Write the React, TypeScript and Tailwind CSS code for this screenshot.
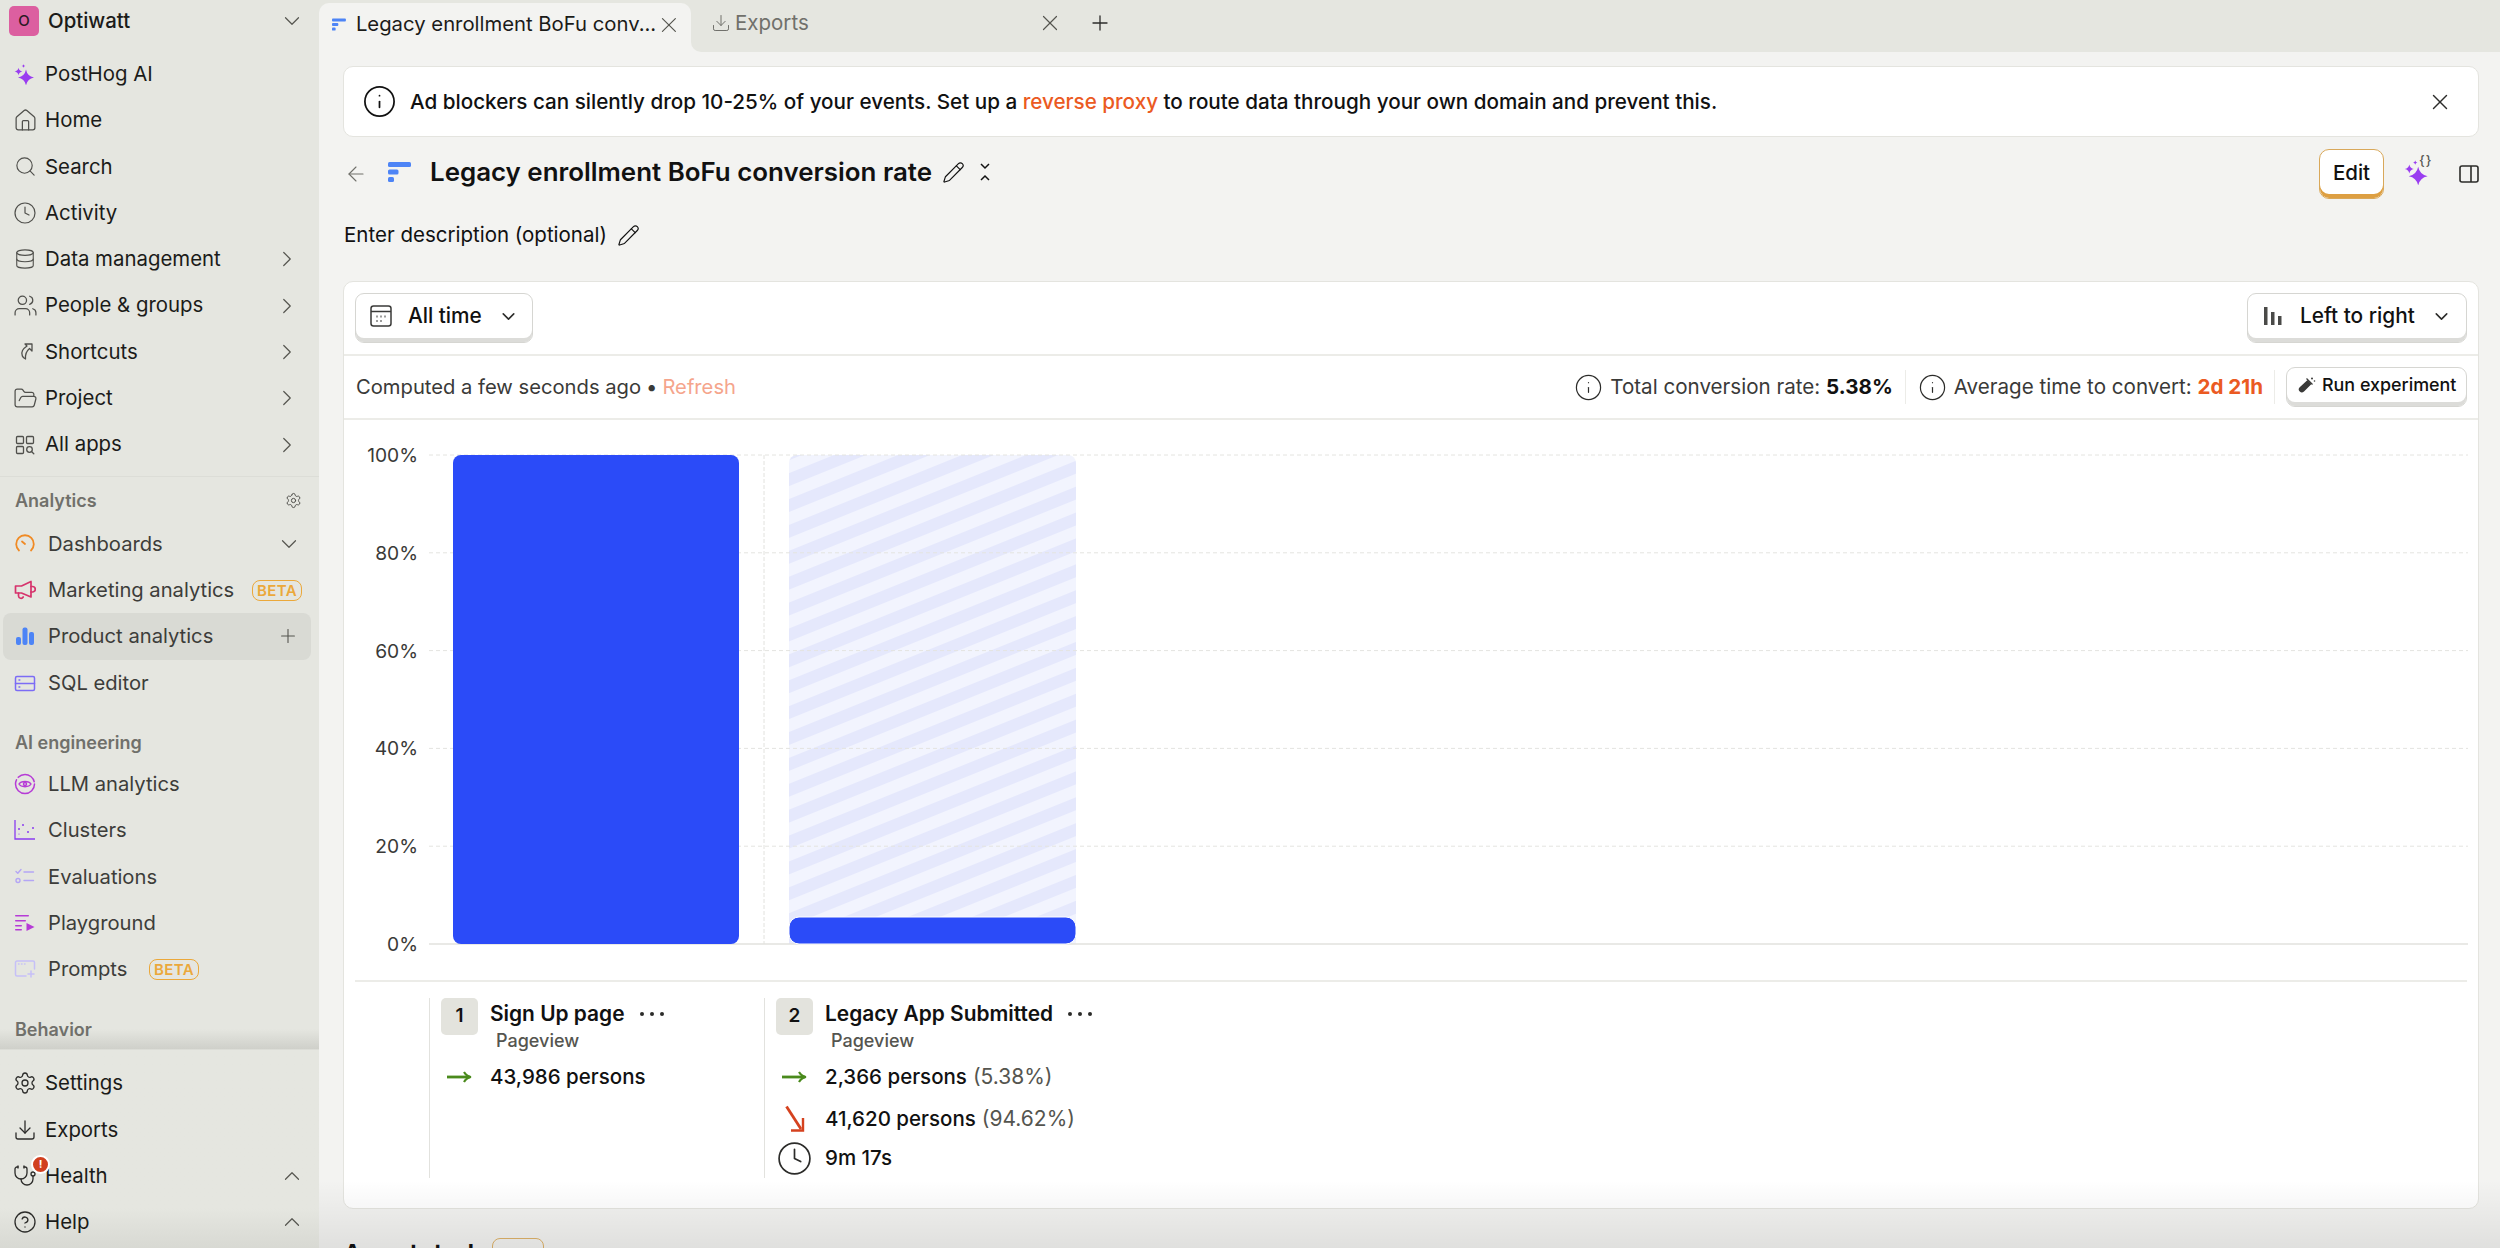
import type { ReactNode } from 'react';
import {
  ArrowLeft,
  ChevronDown,
  ChevronRight,
  ChevronUp,
  CircleHelp,
  Clock,
  Database,
  Download,
  FolderOpen,
  Home,
  Info,
  Pencil,
  Plus,
  Search,
  Settings,
  Stethoscope,
  Users,
  X,
} from 'lucide-react';

const star = (cx: number, cy: number, r: number) => {
  const c = r * 0.16;
  return `M${cx} ${cy - r}Q${cx + c} ${cy - c} ${cx + r} ${cy}Q${cx + c} ${cy + c} ${cx} ${cy + r}Q${cx - c} ${cy + c} ${cx - r} ${cy}Q${cx - c} ${cy - c} ${cx} ${cy - r}z`;
};

const Sparkles = ({ size = 22 }: { size?: number }) => (
  <svg width={size} height={size} viewBox="0 0 22 22" fill="#9a3df0">
    <path d={star(12, 14.500, 8)} />
    <path d={star(4.500, 8.500, 3.800)} />
    <path d={star(9.500, 3, 1.800)} />
  </svg>
);

const FunnelIcon = ({ w = 23, h = 20 }: { w?: number; h?: number }) => (
  <svg width={w} height={h} viewBox="0 0 23 20" fill="#4d84f6">
    <rect x="0" y="0" width="23" height="5" rx="1.500" />
    <rect x="0" y="7.500" width="10.500" height="5" rx="1.500" />
    <rect x="0" y="15" width="6" height="5" rx="1.500" />
  </svg>
);

const Icon = ({ children, className }: { children: ReactNode; className?: string }) => (
  <svg width="22" height="22" viewBox="0 0 22 22" fill="none" stroke="currentColor" strokeWidth="1.300" strokeLinecap="round" strokeLinejoin="round" className={className}>
    {children}
  </svg>
);

const ShortcutIcon = () => (
  <Icon>
    <path d="M11 3h7v7l-2.500-2.500c-3 2.500-4.500 5-4 10.500-2.500-1-5-4.500-3-8.500.8-1.500 2-2.800 4.500-4.500z" />
  </Icon>
);

const AppsIcon = () => (
  <Icon>
    <rect x="2.500" y="2.500" width="7" height="7" rx="1" />
    <rect x="12.500" y="2.500" width="7" height="7" rx="1" />
    <rect x="2.500" y="12.500" width="7" height="7" rx="1" />
    <circle cx="15.500" cy="15.500" r="2.800" />
    <path d="m17.500 17.500 2.300 2.300" />
  </Icon>
);

const GaugeIcon = () => (
  <Icon className="text-[#f08a24]">
    <g strokeWidth="1.800">
      <path d="M5 17.500A8.800 8.800 0 1 1 17 17.500" />
      <path d="m8 8.500 3 2.500" />
    </g>
  </Icon>
);

const MegaphoneIcon = () => (
  <Icon className="text-[#d6336c]">
    <g strokeWidth="1.700">
      <path d="M1.500 7h6L17 2.500v15.500L7.500 14h-6z" />
      <path d="M17 7.500h1.500a2.500 2.500 0 0 1 0 5.500H17" />
      <path d="M4.500 14v3a2.500 2.500 0 0 0 4.700 1" />
    </g>
  </Icon>
);

const BarsIcon = () => (
  <svg width="22" height="22" viewBox="0 0 22 22" fill="#4d84f6">
    <rect x="2" y="12" width="5" height="8" rx="2" />
    <rect x="8.500" y="2.500" width="5" height="17.500" rx="2" />
    <rect x="15" y="7" width="5" height="13" rx="2" />
  </svg>
);

const SqlIcon = () => (
  <Icon className="text-[#7c6cf5]">
    <g strokeWidth="1.500">
      <rect x="1.500" y="4.500" width="19" height="14" rx="1.500" />
      <path d="M1.500 11.500h19" />
      <path d="M5 8h.8M5 15h.8" />
    </g>
  </Icon>
);

const LlmIcon = () => (
  <Icon className="text-[#b63bd6]">
    <g strokeWidth="1.500">
      <circle cx="11" cy="11" r="9.500" strokeDasharray="34 3 20 3" />
      <path d="M5 11c2-3.500 10-3.500 12 0-2 3.500-10 3.500-12 0z" />
      <circle cx="11" cy="11" r="1.500" />
    </g>
  </Icon>
);

const ClusterIcon = () => (
  <svg width="22" height="22" viewBox="0 0 22 22" fill="#8a3df0">
    <path d="M1 1v19h20" fill="none" stroke="#8a3df0" strokeWidth="1.300" />
    <circle cx="5" cy="10" r="1" />
    <circle cx="9" cy="6" r="1" />
    <circle cx="14" cy="13" r="1" />
    <circle cx="19" cy="9" r="1" />
    <circle cx="5" cy="15" r="0.600" />
  </svg>
);

const EvalIcon = () => (
  <Icon className="text-[#b4a6f5]">
    <g strokeWidth="1.400">
      <path d="m2 5.500 1.800 1.700L7 3.500" />
      <circle cx="4" cy="14.500" r="2" />
      <path d="M10 6h9.500M10 14.500h9.500" />
    </g>
  </Icon>
);

const PlaygroundIcon = () => (
  <svg width="22" height="22" viewBox="0 0 22 22" fill="#b63bd6">
    <rect x="1" y="3" width="14" height="1.500" rx="0.700" />
    <rect x="1" y="8" width="11" height="1.500" rx="0.700" />
    <rect x="1" y="13" width="7" height="1.500" rx="0.700" />
    <path d="M12.500 11v8l8-4z" />
    <rect x="1" y="17" width="7" height="1.500" rx="0.700" />
  </svg>
);

const PromptIcon = () => (
  <Icon className="text-[#c6c0f7]">
    <g strokeWidth="1.500">
      <path d="M12 18H3a1.500 1.500 0 0 1-1.500-1.500v-12A1.500 1.500 0 0 1 3 3h16a1.500 1.500 0 0 1 1.500 1.500V11" />
      <path d="M4.500 6h.5M7.500 6h.5M10.500 6h.5" />
      <path d="M17 13v6M14 16h6" />
    </g>
  </Icon>
);

const Beta = () => (
  <span className="rounded-lg border border-[#eba83a] px-[4px] text-[15px] leading-[20px] font-semibold tracking-wide text-[#eba83a]">
    BETA
  </span>
);

type RowProps = {
  icon: ReactNode;
  label: string;
  right?: ReactNode;
  selected?: boolean;
  dim?: boolean;
};

const chevron = <ChevronRight size={26} strokeWidth={1.1} className="mr-[11px] text-[#55554f]" />;
const chevronUp = <ChevronUp size={26} strokeWidth={1.1} className="mr-[6px] text-[#55554f]" />;

const NavRow = ({ icon, label, right, selected, dim }: RowProps) => (
  <div
    className={`mr-[8px] ml-[3px] flex h-[46.3px] items-center rounded-lg pl-[11px] ${selected ? 'bg-[#d9dad4]' : ''} ${dim ? 'text-[#3d3d3a]' : 'text-[#1b1b19]'}`}
  >
    <span className="flex w-[22px] shrink-0 justify-center [&>svg]:shrink-0">{icon}</span>
    <span className={`${dim ? 'ml-[12px] text-[20.200px]' : 'ml-[9px] text-[20.400px]'} leading-none whitespace-nowrap`}>{label}</span>
    <span className="ml-auto flex items-center">{right}</span>
  </div>
);

const Section = ({ title, right }: { title: string; right?: ReactNode }) => (
  <div className="flex h-[40px] items-center justify-between pr-[17px] pl-[15px] text-[18px] font-semibold text-[#70706b]">
    <span>{title}</span>
    {right}
  </div>
);

const Sidebar = () => {
  const ic = 'text-[#50504c]';
  return (
    <aside className="flex h-full w-[319px] shrink-0 flex-col bg-[#e5e6e0]">
      <div className="flex h-[51px] items-start pt-[6px] pr-[14px] pl-[9px]">
        <span className="flex size-[30px] items-center justify-center rounded-[5px] bg-[#dc5fa0] text-[15px] font-medium text-[#2b1a24]">O</span>
        <span className="ml-[9px] text-[20.400px] leading-[30px] font-medium text-[#1b1b19]">Optiwatt</span>
        <ChevronDown size={26} strokeWidth={1.1} className="mt-[2px] ml-auto text-[#55554f]" />
      </div>
      <div className="border-b border-[#dcddd7] pb-[8px]">
        <NavRow icon={<Sparkles />} label="PostHog AI" />
        <NavRow icon={<Home size={25} strokeWidth={1.2} className={ic} />} label="Home" />
        <NavRow icon={<Search size={23} strokeWidth={1.2} className={ic} />} label="Search" />
        <NavRow icon={<Clock size={24} strokeWidth={1.2} className={ic} />} label="Activity" />
        <NavRow icon={<Database size={22} strokeWidth={1.2} className={ic} />} label="Data management" right={chevron} />
        <NavRow icon={<Users size={25} strokeWidth={1.2} className={ic} />} label="People & groups" right={chevron} />
        <NavRow icon={<span className={ic}><ShortcutIcon /></span>} label="Shortcuts" right={chevron} />
        <NavRow icon={<FolderOpen size={25} strokeWidth={1.2} className={ic} />} label="Project" right={chevron} />
        <NavRow icon={<span className={ic}><AppsIcon /></span>} label="All apps" right={chevron} />
      </div>
      <div className="mt-[4px]">
        <Section title="Analytics" right={<Settings size={17} strokeWidth={1.4} className="text-[#50504c]" />} />
        <NavRow dim icon={<GaugeIcon />} label="Dashboards" right={<ChevronDown size={26} strokeWidth={1.1} className="mr-[9px] text-[#55554f]" />} />
        <NavRow dim icon={<MegaphoneIcon />} label="Marketing analytics" right={<span className="mr-[9px]"><Beta /></span>} />
        <NavRow dim selected icon={<BarsIcon />} label="Product analytics" right={<Plus size={22} strokeWidth={1.2} className="mr-[12px] text-[#55554f]" />} />
        <NavRow dim icon={<SqlIcon />} label="SQL editor" />
      </div>
      <div className="mt-[17px]">
        <div className="-mb-[2px]">
          <Section title="AI engineering" />
        </div>
        <NavRow dim icon={<LlmIcon />} label="LLM analytics" />
        <NavRow dim icon={<ClusterIcon />} label="Clusters" />
        <NavRow dim icon={<EvalIcon />} label="Evaluations" />
        <NavRow dim icon={<PlaygroundIcon />} label="Playground" />
        <NavRow dim icon={<PromptIcon />} label="Prompts" right={<span className="mr-[112px]"><Beta /></span>} />
      </div>
      <div className="mt-[17px] bg-gradient-to-b from-transparent from-50% to-[#cfd0ca]">
        <Section title="Behavior" />
      </div>
      <div className="flex-1 border-t border-[#dcddd7] bg-gradient-to-b from-[#e5e6e0] from-80% to-[#d8d9d3] pt-[10px]">
        <NavRow icon={<Settings size={24} strokeWidth={1.3} className="text-[#2c2c2a]" />} label="Settings" />
        <NavRow icon={<Download size={24} strokeWidth={1.3} className="text-[#2c2c2a]" />} label="Exports" />
        <div className="relative">
          <NavRow icon={<Stethoscope size={24} strokeWidth={1.3} className="text-[#2c2c2a]" />} label="Health" right={chevronUp} />
          <span className="absolute top-[2px] left-[31px] flex size-[19px] items-center justify-center rounded-full border-2 border-white bg-[#d1401f] text-[11px] font-bold text-white">!</span>
        </div>
        <NavRow icon={<CircleHelp size={24} strokeWidth={1.3} className="text-[#2c2c2a]" />} label="Help" right={chevronUp} />
      </div>
    </aside>
  );
};

const Tabs = () => (
  <div className="flex h-[52px] shrink-0 bg-[#e5e6e0]">
    <div className="mt-[3px] flex h-[49px] w-[372px] shrink-0 items-center rounded-t-[10px] bg-[#f3f3f1] pr-[9px] pb-[6px] pl-[13px]">
      <FunnelIcon w={14} h={13} />
      <span className="ml-[10px] text-[20.300px] whitespace-nowrap text-[#1b1b19]">Legacy enrollment BoFu conv...</span>
      <X size={26} strokeWidth={1.1} className="ml-auto text-[#55554f]" />
    </div>
    <div className="flex-1 bg-[#f3f3f1]">
      <div className="flex h-full items-center rounded-bl-[10px] bg-[#e5e6e0] pb-[6px]">
        <Download size={20} strokeWidth={1.2} className="ml-[20px] text-[#70706b]" />
        <span className="ml-[4px] text-[20.500px] text-[#70706b]">Exports</span>
        <X size={26} strokeWidth={1.1} className="ml-[228px] text-[#55554f]" />
        <Plus size={24} strokeWidth={1.3} className="ml-[25px] text-[#2c2c2a]" />
      </div>
    </div>
  </div>
);

const Banner = () => (
  <div className="flex h-[71px] items-center rounded-[10px] border border-[#e4e4df] bg-white pr-[25px] pl-[18px]">
    <Info size={35} strokeWidth={1.2} className="text-[#111]" />
    <p className="ml-[13px] pt-[2px] text-[20.650px] font-medium text-[#111]">
      Ad blockers can silently drop 10-25% of your events. Set up a <span className="text-[#eb5a22]">reverse proxy</span> to route data through your own domain and prevent this.
    </p>
    <X size={26} strokeWidth={1.3} className="ml-auto text-[#2c2c2a]" />
  </div>
);

const TitleRow = () => (
  <div className="mt-[12px] flex h-[50px] items-center">
    <ArrowLeft size={24} strokeWidth={1.1} className="ml-[1px] text-[#70706b]" />
    <span className="mb-[4px] ml-[20px]"><FunnelIcon /></span>
    <h1 className="mb-[4px] ml-[19px] text-[25.900px] leading-none font-semibold whitespace-nowrap text-[#111]">
      Legacy enrollment BoFu conversion rate
    </h1>
    <Pencil size={23} strokeWidth={1.2} className="mb-[4px] ml-[10px] text-[#111]" />
    <svg width="12" height="18" viewBox="0 0 12 18" fill="none" stroke="#111" strokeWidth="1.500" className="mb-[4px] ml-[14px]">
      <path d="m2 1 4 4 4-4M2 17l4-4 4 4" />
    </svg>
    <button className="mr-[20px] ml-auto flex h-[50px] w-[65px] items-start justify-center rounded-[10px] border-[1.500px] border-[#d9a85a] bg-white pt-[11px] text-[20.500px] leading-[24px] font-medium text-[#111] shadow-[inset_0_-4px_0_#dd9f42]">
      Edit
    </button>
    <span className="relative mb-[4px] flex w-[26px]">
      <Sparkles size={26} />
      <span className="absolute -top-[8px] left-[15px] text-[13px] font-medium tracking-[1px] text-[#55554f]">{'{}'}</span>
    </span>
    <svg width="20" height="20" viewBox="0 0 20 20" fill="none" stroke="#2c2c2a" strokeWidth="1.600" className="ml-[29px]">
      <rect x="1" y="2" width="18" height="16" rx="2" />
      <path d="M12 2v16" />
    </svg>
  </div>
);

const LiftButton = ({ children, className }: { children: ReactNode; className?: string }) => (
  <button className={`flex items-center rounded-[9px] border-[1.500px] border-[#d6d6d2] bg-white shadow-[inset_0_-4px_0_#dcdcd9] ${className ?? ''}`}>
    {children}
  </button>
);

const Toolbar = () => (
  <div className="flex h-[74px] items-center justify-between border-b-2 border-[#ecece8] px-[11px]">
    <LiftButton className="h-[50px] w-[178px] pb-[4px] pl-[13px]">
      <svg width="24" height="24" viewBox="0 0 24 24" fill="none" stroke="#3a3a38" strokeWidth="1.500">
        <rect x="2" y="2" width="20" height="20" rx="2.500" />
        <path d="M2 7.500h20" />
        <path d="M7.500 12.500h1M11.500 12.500h1M15.500 12.500h1M7.500 17h1M11.500 17h1" strokeWidth="1.800" />
      </svg>
      <span className="ml-[15px] text-[20.800px] font-medium text-[#111]">All time</span>
      <ChevronDown size={21} strokeWidth={1.8} className="mr-[13px] ml-auto text-[#2c2c2a]" />
    </LiftButton>
    <LiftButton className="h-[50px] w-[220px] pb-[4px] pl-[15px]">
      <svg width="20" height="20" viewBox="0 0 20 20" fill="#4a4a48">
        <rect x="1" y="1" width="3.500" height="18" />
        <rect x="8" y="6" width="3.500" height="13" />
        <rect x="15" y="10" width="3.500" height="9" />
      </svg>
      <span className="ml-[17px] text-[20.800px] font-medium text-[#111]">Left to right</span>
      <ChevronDown size={21} strokeWidth={1.8} className="mr-[14px] ml-auto text-[#2c2c2a]" />
    </LiftButton>
  </div>
);

const StatsRow = () => (
  <div className="flex h-[64px] items-center border-b-2 border-[#ecece8] pr-[11px] pl-[12px] text-[20.200px] text-[#3a3a38]">
    <span>Computed a few seconds ago</span>
    <span className="mx-[5px]">•</span>
    <span className="text-[#f5a58c]">Refresh</span>
    <div className="ml-auto flex items-center text-[20.600px]">
      <Info size={29} strokeWidth={1} className="text-[#2c2c2a]" />
      <span className="ml-[7px]">Total conversion rate: <b className="font-bold text-[#111]">5.38%</b></span>
      <span className="mx-[12px] h-[34px] w-px bg-[#ecece8]" />
      <Info size={29} strokeWidth={1} className="text-[#2c2c2a]" />
      <span className="ml-[7px]">Average time to convert: <b className="font-bold text-[#eb5a22]">2d 21h</b></span>
      <span className="mx-[11px] h-[34px] w-px bg-[#ecece8]" />
      <LiftButton className="h-[40px] w-[181px] pb-[4px] pl-[9px]">
        <svg width="20" height="20" viewBox="0 0 20 20" fill="#3a3a38">
          <path d="M11.500 5 15.500 9 8 16.500a3 3 0 0 1-4.300-4.200z" />
          <path d="m10.500 3.500 6 6" stroke="#3a3a38" strokeWidth="1.200" />
          <circle cx="16" cy="3.500" r="1" />
          <circle cx="18.500" cy="6" r="0.800" />
        </svg>
        <span className="ml-[6px] text-[17.900px] leading-none font-medium text-[#111]">Run experiment</span>
      </LiftButton>
    </div>
  </div>
);

const gridRows = [
  { label: '100%', y: 35 },
  { label: '80%', y: 132.8 },
  { label: '60%', y: 230.6 },
  { label: '40%', y: 328.4 },
  { label: '20%', y: 426.2 },
  { label: '0%', y: 524 },
];

const Chart = () => (
  <svg width="2134" height="561" viewBox="0 0 2134 561" className="block" fontFamily="Inter, sans-serif">
    <defs>
      <pattern id="stripes" width="24" height="24" patternUnits="userSpaceOnUse" patternTransform="rotate(-22)">
        <rect width="24" height="24" fill="#f2f4fe" />
        <rect width="24" height="12" fill="#e5e8fc" />
      </pattern>
    </defs>
    <path d="M445 43a8 8 0 0 1 8-8h271a8 8 0 0 1 8 8v481H445z" fill="url(#stripes)" />
    {gridRows.map(({ label, y }) => (
      <g key={label}>
        <line
          x1="85"
          x2="2124"
          y1={y}
          y2={y}
          stroke={y === 524 ? '#e2e2de' : '#e4e4e0'}
          strokeWidth={y === 524 ? 1.500 : 1}
          strokeDasharray={y === 524 ? undefined : '4 3'}
        />
        <text x="74" y={y + 7} textAnchor="end" fontSize="19.200" fill="#3a3a38">{label}</text>
      </g>
    ))}
    <line x1="420" x2="420" y1="35" y2="524" stroke="#e2e2de" strokeDasharray="4 2" />
    <path d="M109 43a8 8 0 0 1 8-8h270a8 8 0 0 1 8 8v473a8 8 0 0 1-8 8H117a8 8 0 0 1-8-8z" fill="#2b4bf8" />
    <path d="M445 507a10 10 0 0 1 10-10h267a10 10 0 0 1 10 10v7a10 10 0 0 1-10 10H455a10 10 0 0 1-10-10z" fill="#2b4bf8" stroke="#fff" strokeWidth="1" />
  </svg>
);

const ArrowRightGreen = () => (
  <svg width="25" height="16" viewBox="0 0 25 16" fill="none" stroke="#4a8a1c" strokeWidth="2.800">
    <path d="M0 8h23" />
    <path d="M17 3c1.500 2.500 3.500 4.500 7 5-3.500.5-5.500 2.500-7 5" strokeWidth="2.200" />
  </svg>
);

const ArrowDownRed = () => (
  <svg width="20" height="28" viewBox="0 0 20 28" fill="none" stroke="#d5421f" strokeWidth="2.800">
    <path d="M1.500 1.500 16 24" />
    <path d="M6 25.500h12V13" strokeWidth="2.400" />
  </svg>
);

const Stat = ({ icon, value, pct, className }: { icon: ReactNode; value: string; pct?: string; className?: string }) => (
  <div className={`flex h-[36px] items-center ${className ?? ''}`}>
    <span className="flex w-[37px] justify-center [&>svg]:shrink-0">{icon}</span>
    <span className="ml-[12px] text-[20.500px] font-medium text-[#111]">
      {value}
      {pct && <span className="ml-[6px] text-[21px] font-normal text-[#55554f]">{pct}</span>}
    </span>
  </div>
);

const Step = ({ n, name, children }: { n: number; name: string; children: ReactNode }) => (
  <div className="h-[180px] w-[335px] border-l border-[#e2e2de] pl-[11px]">
    <div className="flex">
      <span className="flex size-[37px] items-center justify-center rounded-[5px] bg-[#e3e3dd] text-[19px] font-semibold text-[#111]">{n}</span>
      <div className="ml-[12px]">
        <div className="flex h-[32px] items-center">
          <span className="text-[20.900px] font-semibold text-[#111]">{name}</span>
          <span className="ml-[15px] flex gap-[6px]">
            <i className="size-[4px] rounded-full bg-[#2c2c2a]" />
            <i className="size-[4px] rounded-full bg-[#2c2c2a]" />
            <i className="size-[4px] rounded-full bg-[#2c2c2a]" />
          </span>
        </div>
        <div className="ml-[6px] h-[22px] text-[18px] leading-[22px] font-medium text-[#55554f]">Pageview</div>
      </div>
    </div>
    <div className="mt-[7px]">{children}</div>
  </div>
);

const Legend = () => (
  <div className="mx-[11px] -mt-[1px] flex border-t-2 border-[#ecece8] pt-[16px] pb-[30px] pl-[74px]">
    <Step n={1} name="Sign Up page">
      <Stat icon={<ArrowRightGreen />} value="43,986 persons" />
    </Step>
    <Step n={2} name="Legacy App Submitted">
      <Stat icon={<ArrowRightGreen />} value="2,366 persons" pct="(5.38%)" />
      <Stat className="mt-[6px]" icon={<ArrowDownRed />} value="41,620 persons" pct="(94.62%)" />
      <Stat className="mt-[3px]" icon={<Clock size={37} strokeWidth={1.1} className="text-[#2c2c2a]" />} value="9m 17s" />
    </Step>
  </div>
);

export default function App() {
  return (
    <div className="flex h-[1248px] w-[2500px] overflow-hidden bg-[#e5e6e0] font-['Inter',sans-serif]">
      <Sidebar />
      <main className="relative flex min-w-0 flex-1 flex-col">
        <Tabs />
        <div className="min-h-0 flex-1 overflow-hidden bg-[#f3f3f1] pt-[14px] pr-[21px] pl-[24px]">
          <Banner />
          <TitleRow />
          <div className="mt-[21px] ml-[1px] flex h-[30px] items-center text-[20.500px] text-[#111]">
            Enter description (optional)
            <Pencil size={23} strokeWidth={1.2} className="ml-[10px]" />
          </div>
          <section className="mt-[31px] rounded-[10px] border border-[#e4e4df] bg-white">
            <Toolbar />
            <StatsRow />
            <Chart />
            <Legend />
          </section>
          <div className="mt-[29px] flex items-start">
            <h2 className="text-[26px] leading-[32px] font-semibold text-[#111]">Annotated</h2>
            <span className="ml-[18px] h-[40px] w-[52px] rounded-lg border border-[#dfb36a]" />
          </div>
        </div>
        <div className="pointer-events-none absolute inset-x-0 bottom-0 h-[68px] bg-gradient-to-b from-transparent to-[#00000014]" />
      </main>
    </div>
  );
}
